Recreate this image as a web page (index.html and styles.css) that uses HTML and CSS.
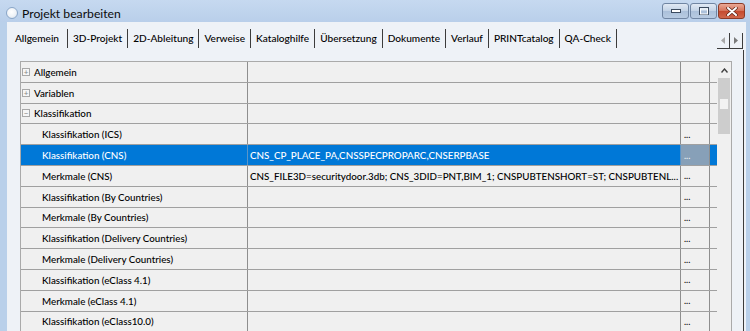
FILE: index.html
```html
<!DOCTYPE html>
<html lang="de">
<head>
<meta charset="utf-8">
<title>Projekt bearbeiten</title>
<link rel="stylesheet" href="styles.css">
</head>
<body>
<div class="window">
  <div class="titlebar">
    <span class="app-icon"></span>
    <span class="title">Projekt bearbeiten</span>
    <div class="caption-buttons">
      <span class="cbtn"><svg width="10" height="4" viewBox="0 0 10 4"><rect x="0.5" y="0.5" width="9" height="3" fill="#fff" stroke="#3b4a5e" stroke-width="1"/></svg></span>
      <span class="cbtn"><svg width="10" height="8" viewBox="0 0 10 8"><rect x="0.5" y="0.5" width="9" height="7" fill="none" stroke="#3b4a5e" stroke-width="1"/><rect x="1.5" y="2" width="7" height="5" fill="none" stroke="#fff" stroke-width="1"/></svg></span>
      <span class="cbtn close"><svg width="12" height="9" viewBox="0 0 12 9"><path d="M2 1 L10 8 M10 1 L2 8" stroke="#5a2316" stroke-width="3.4" stroke-linecap="round"/><path d="M2 1 L10 8 M10 1 L2 8" stroke="#fff" stroke-width="2" stroke-linecap="round"/></svg></span>
    </div>
  </div>
  <div class="client">
    <div class="tabstrip">
      <div class="tabs">
        <span class="tab active">Allgemein</span>
        <span class="tab">3D-Projekt</span>
        <span class="tab">2D-Ableitung</span>
        <span class="tab">Verweise</span>
        <span class="tab">Kataloghilfe</span>
        <span class="tab">Übersetzung</span>
        <span class="tab">Dokumente</span>
        <span class="tab">Verlauf</span>
        <span class="tab">PRINTcatalog</span>
        <span class="tab">QA-Check</span>
      </div>
      <div class="tab-scroll">
        <span class="sbtn"><svg width="4" height="7" viewBox="0 0 4 7"><path d="M4 0 L0 3.5 L4 7 Z" fill="#a8a8a8"/></svg></span>
        <span class="sbtn"><svg width="4" height="7" viewBox="0 0 4 7"><path d="M0 0 L4 3.5 L0 7 Z" fill="#7a7a7a"/></svg></span>
      </div>
    </div>
    <div class="panel">
      <div class="grid">
        <div class="rows">
          <div class="row"><div class="c1 group"><span class="exp">+</span>Allgemein</div><div class="c2"></div><div class="c3"></div><div class="c4"></div></div>
          <div class="row"><div class="c1 group"><span class="exp">+</span>Variablen</div><div class="c2"></div><div class="c3"></div><div class="c4"></div></div>
          <div class="row"><div class="c1 group"><span class="exp">−</span>Klassifikation</div><div class="c2"></div><div class="c3"></div><div class="c4"></div></div>
          <div class="row"><div class="c1">Klassifikation (ICS)</div><div class="c2"></div><div class="c3">...</div><div class="c4"></div></div>
          <div class="row selected"><div class="c1">Klassifikation (CNS)</div><div class="c2">CNS_CP_PLACE_PA,CNSSPECPROPARC,CNSERPBASE</div><div class="c3">...</div><div class="c4"></div></div>
          <div class="row"><div class="c1">Merkmale (CNS)</div><div class="c2">CNS_FILE3D=securitydoor.3db; CNS_3DID=PNT,BIM_1; CNSPUBTENSHORT=ST; CNSPUBTENL...</div><div class="c3">...</div><div class="c4"></div></div>
          <div class="row"><div class="c1">Klassifikation (By Countries)</div><div class="c2"></div><div class="c3">...</div><div class="c4"></div></div>
          <div class="row"><div class="c1">Merkmale (By Countries)</div><div class="c2"></div><div class="c3">...</div><div class="c4"></div></div>
          <div class="row"><div class="c1">Klassifikation (Delivery Countries)</div><div class="c2"></div><div class="c3">...</div><div class="c4"></div></div>
          <div class="row"><div class="c1">Merkmale (Delivery Countries)</div><div class="c2"></div><div class="c3">...</div><div class="c4"></div></div>
          <div class="row"><div class="c1">Klassifikation (eClass 4.1)</div><div class="c2"></div><div class="c3">...</div><div class="c4"></div></div>
          <div class="row"><div class="c1">Merkmale (eClass 4.1)</div><div class="c2"></div><div class="c3">...</div><div class="c4"></div></div>
          <div class="row"><div class="c1">Klassifikation (eClass10.0)</div><div class="c2"></div><div class="c3">...</div><div class="c4"></div></div>
        </div>
        <div class="vscroll">
          <span class="vs-up"><svg width="7" height="5" viewBox="0 0 7 5"><path d="M0.5 4.5 L3.5 1 L6.5 4.5" fill="none" stroke="#404040" stroke-width="1.4"/></svg></span>
          <span class="vs-thumb"><span class="vs-grip"></span></span>
        </div>
      </div>
    </div>
  </div>
</div>
</body>
</html>
```
FILE: styles.css
```css
* { box-sizing: border-box; }
html, body { margin: 0; padding: 0; }
body {
  width: 750px;
  height: 331px;
  overflow: hidden;
  background: #b9d0ea;
  font-family: Lato, "Noto Sans", sans-serif;
  font-size: 9.8px;
  font-weight: 500;
  color: #000000;
}
.window { height: 331px; display: flex; flex-direction: column; }

.titlebar {
  height: 22px;
  flex: none;
  display: flex;
  align-items: flex-start;
  padding-left: 6px;
  background: linear-gradient(#c6d9f0, #b9cfea);
}
.app-icon {
  flex: none;
  width: 12px; height: 12px;
  margin-top: 7px;
  border-radius: 50%;
  border: 1px solid #8aa6c8;
  background: radial-gradient(circle at 45% 40%, #ffffff 0%, #eef2f7 55%, #c9d6e6 100%);
}
.title {
  margin-left: 4px;
  margin-top: 6px;
  font-size: 12.2px;
  font-weight: 400;
  line-height: 15px;
  color: #0c0c0c;
}
.caption-buttons {
  margin-left: auto;
  margin-right: 5px;
  margin-top: 3px;
  display: flex;
  gap: 1px;
}
.cbtn {
  width: 27px; height: 16px;
  border: 1px solid #7085a2;
  border-radius: 3px;
  background: linear-gradient(#e1e9f4, #c3d3e6 48%, #abc0da 52%, #b8cbe2);
  display: flex; align-items: center; justify-content: center;
}
.cbtn.close {
  background: linear-gradient(#eaa996, #d5735a 48%, #c54a2f 52%, #d0674b);
  border-color: #8b3b28;
}

.client {
  flex: 1;
  min-height: 0;
  margin: 0 4px 0 7px;
  background: #eef2f7;
  display: flex;
  flex-direction: column;
  overflow: hidden;
}

.tabstrip {
  height: 28px;
  flex: none;
  padding-top: 7px;
  display: flex;
  align-items: flex-start;
}
.tabs { display: flex; padding-left: 2px; font-size: 10.1px; }
.tab {
  height: 19px;
  line-height: 19px;
  padding: 0 5px;
  border-right: 1px solid #3c3c3c;
  white-space: nowrap;
}
.tab.active { padding: 0 8px 0 6px; }

.tab-scroll {
  margin-left: auto;
  margin-right: 3px;
  margin-top: 4px;
  display: flex;
}
.sbtn {
  width: 13px; height: 16px;
  border-right: 1px solid #3c3c3c;
  border-bottom: 1px solid #3c3c3c;
  display: flex; align-items: center; justify-content: center;
}

.panel {
  flex: 1;
  min-height: 0;
  margin-right: 2px;
  border-right: 1px solid #3c3c3c;
  padding: 11px 0 0 13px;
  overflow: hidden;
}
.grid {
  width: 712px;
  display: flex;
  border: 1px solid #aaaaaa;
  border-bottom: none;
  background: #f0f0f0;
}
.rows { width: 696px; flex: none; }
.row {
  display: flex;
  height: 20.8px;
  border-bottom: 1px solid #a0a0a0;
  background: #f0f0f0;
}
.row > div {
  display: flex;
  align-items: center;
  white-space: nowrap;
  overflow: hidden;
}
.c1 { width: 227px; flex: none; padding-left: 21px; border-right: 1px solid #8e8e8e; }
.c1.group { padding-left: 1px; }
.c2 { width: 433px; flex: none; padding-left: 2px; border-right: 1px solid #8e8e8e; }
.c3 { width: 29px; flex: none; padding-left: 3px; border-right: 1px solid #8e8e8e; font-size: 9px; }
.c4 { width: 7px; flex: none; }
.exp {
  flex: none;
  width: 8px; height: 8px;
  margin-right: 4px;
  border: 1px solid #a8a8a8;
  background: #f6f6f6;
  color: #8a8a8a;
  font-size: 8px;
  line-height: 6px;
  display: flex; align-items: center; justify-content: center;
}
.row.selected { background: #0078d7; color: #ffffff; }
.row.selected .c1, .row.selected .c2 { border-right-color: #5a95c8; }
.row.selected .c3 { background: #87a0b8; color: #eef2f6; }

.vscroll {
  width: 14px;
  flex: none;
  background: #f0f0f0;
  display: flex;
  flex-direction: column;
  align-items: center;
}
.vs-up { margin-top: 5px; height: 7px; display: flex; align-items: center; }
.vs-thumb {
  margin-top: 4px;
  width: 12px;
  height: 56px;
  background: #cdcdcd;
  display: flex;
  justify-content: center;
  padding-top: 21px;
}
.vs-grip { width: 8px; height: 10px; background: #f2f2f2; }
```
